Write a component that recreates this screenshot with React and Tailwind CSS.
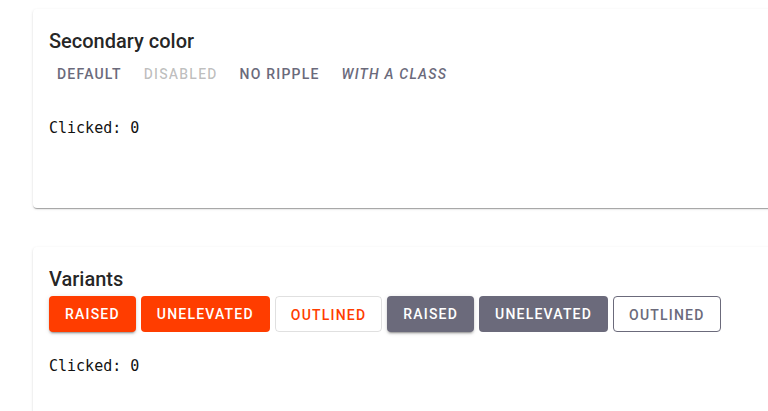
export default function App() {
  const font = { fontFamily: "Roboto, 'Liberation Sans', sans-serif" };
  const mono = { fontFamily: "'DejaVu Sans Mono', 'Liberation Mono', monospace" };
  const btn =
    "h-9 rounded-[4px] text-[14px] font-medium uppercase tracking-[1.2px] leading-[36px] whitespace-nowrap";
  const card =
    "bg-white rounded-[4px] shadow-[0_2px_1px_-1px_rgba(0,0,0,0.2),0_1px_1px_0_rgba(0,0,0,0.14),0_1px_3px_0_rgba(0,0,0,0.12)] px-4 pt-4";
  const raised =
    "shadow-[0_3px_1px_-2px_rgba(0,0,0,0.2),0_2px_2px_0_rgba(0,0,0,0.14),0_1px_5px_0_rgba(0,0,0,0.12)]";
  return (
    <div className="w-[768px] h-[411px] overflow-hidden bg-white" style={font}>
      <div className="pl-[33px] pt-[9px]">
        <div className={`${card} w-[780px] h-[199px]`}>
          <h2 className="text-[20px] font-medium leading-[32px] text-[#000000de]">Secondary color</h2>
          <div className="flex gap-[6px] -mt-px">
            <button className={`${btn} px-2 text-[#6b6a7b]`}>Default</button>
            <button className={`${btn} px-2 text-[#00000042]`}>Disabled</button>
            <button className={`${btn} px-2 text-[#6b6a7b]`}>No ripple</button>
            <button className={`${btn} px-2 text-[#6b6a7b] italic`}>With a class</button>
          </div>
          <pre className="mt-[27px] text-[15px] leading-[18px] text-[#111]" style={mono}>Clicked: 0</pre>
        </div>
        <div className={`${card} mt-[39px] w-[780px] h-[200px]`}>
          <h2 className="text-[20px] font-medium leading-[32px] text-[#000000de]">Variants</h2>
          <div className="flex gap-[5px] mt-px">
            <button className={`${btn} px-4 bg-[#ff3d00] text-white ${raised}`}>Raised</button>
            <button className={`${btn} px-4 bg-[#ff3d00] text-white`}>Unelevated</button>
            <button className={`${btn} px-[15px] border border-[#0000001f] text-[#ff3d00] leading-[34px]`}>Outlined</button>
            <button className={`${btn} px-4 bg-[#6b6a7b] text-white ${raised}`}>Raised</button>
            <button className={`${btn} px-4 bg-[#6b6a7b] text-white`}>Unelevated</button>
            <button className={`${btn} px-[15px] border border-[#6b6a7b] text-[#6b6a7b] leading-[34px]`}>Outlined</button>
          </div>
          <pre className="mt-[25px] text-[15px] leading-[18px] text-[#111]" style={mono}>Clicked: 0</pre>
        </div>
      </div>
    </div>
  );
}
